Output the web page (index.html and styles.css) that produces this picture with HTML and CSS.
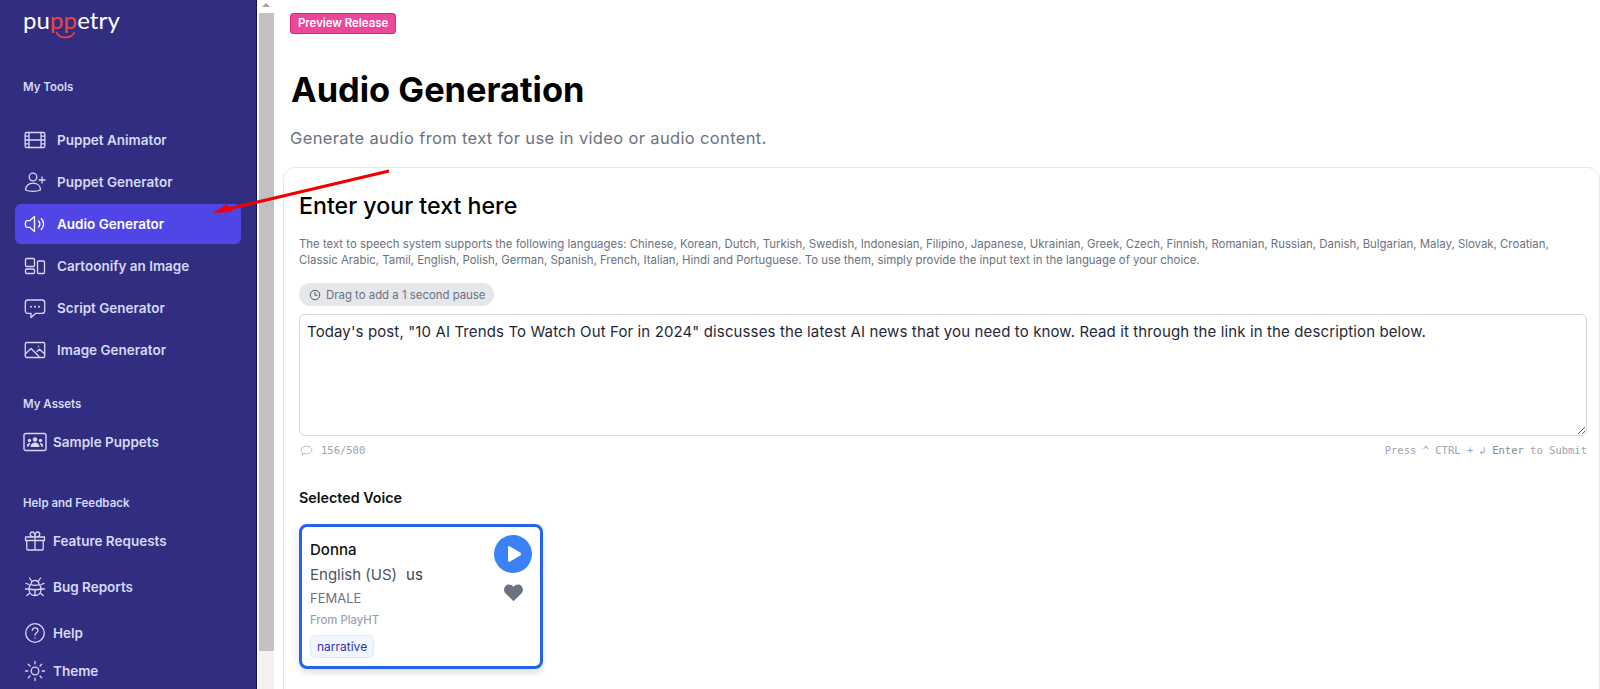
FILE: index.html
```html
<!DOCTYPE html>
<html lang="en">
<head>
<meta charset="utf-8">
<title>Audio Generation</title>
<link rel="stylesheet" href="styles.css">
</head>
<body>
<div class="app">
  <aside class="sidebar">
    <div class="logo">
      <span class="logo-text">pu<span class="logo-red">pp</span>etry</span>
      <svg class="logo-smile" viewBox="0 0 26 10"><path d="M2 2c3 8 18 8 22 0" fill="none" stroke="#ef4444" stroke-width="2" stroke-linecap="round"/></svg>
    </div>
    <h3 class="nav-title first">My Tools</h3>
    <nav class="nav">
      <a class="nav-item"><svg class="icon" viewBox="0 0 24 24"><rect x="2.2" y="4.5" width="19.6" height="15" rx="1.2"/><path d="M6 4.5v15M18 4.500v15M2.200 8.200H6M2.200 12h19.600M2.200 15.800H6M18 8.200h3.800M18 15.800h3.800"/></svg>Puppet Animator</a>
      <a class="nav-item"><svg class="icon" viewBox="0 0 24 24"><circle cx="10" cy="7" r="3.800"/><path d="M2.500 20c0-4.500 3.400-6.800 7.500-6.800s7.500 2.300 7.500 6.800c-2 .9-4.600 1.300-7.500 1.300S4.500 20.900 2.500 20zM19 7v6M16 10h6"/></svg>Puppet Generator</a>
      <a class="nav-item active"><svg class="icon" viewBox="0 0 24 24"><path d="M11.500 4.500 6.700 8.700H4.200c-.9 0-1.500.7-1.700 1.500-.2 1.200-.2 2.400 0 3.600.2.800.8 1.500 1.700 1.500h2.500l4.800 4.200zM15.500 9c1.600 1.700 1.600 4.300 0 6M18.300 6.500c3 3.100 3 7.900 0 11"/></svg>Audio Generator</a>
      <a class="nav-item"><svg class="icon" viewBox="0 0 24 24"><rect x="2.500" y="4.500" width="9" height="8" rx="1.200"/><rect x="2.500" y="15" width="9" height="4.500" rx="1.200"/><rect x="14.500" y="7" width="7" height="12.500" rx="1.200"/></svg>Cartoonify an Image</a>
      <a class="nav-item"><svg class="icon" viewBox="0 0 24 24"><path d="M5 4h14c1.600 0 2.700 1.100 2.700 2.700v8c0 1.600-1.100 2.700-2.700 2.700h-6.500L8 21.500v-4.100H5c-1.600 0-2.700-1.100-2.700-2.700v-8C2.300 5.100 3.400 4 5 4z"/><path d="M8 10.700h.01M12 10.700h.01M16 10.700h.01" stroke-width="2"/></svg>Script Generator</a>
      <a class="nav-item"><svg class="icon" viewBox="0 0 24 24"><rect x="2.300" y="4.500" width="19.400" height="15" rx="1.200"/><path d="m2.300 16 5.700-5.500 8 8M14 13.500l2.500-2.200 5.200 4.700M15.500 8.500h.01"/></svg>Image Generator</a>
    </nav>
    <h3 class="nav-title assets">My Assets</h3>
    <a class="nav-item tight"><svg class="icon wide" viewBox="0 0 24 20"><rect x="1" y="1.500" width="22" height="17" rx="2" stroke-width="1.400"/><circle cx="12" cy="7.500" r="2.200" class="solid"/><circle cx="6.500" cy="8.500" r="1.700" class="solid"/><circle cx="17.500" cy="8.500" r="1.700" class="solid"/><path d="M7.500 15c0-3 2-4.500 4.500-4.500s4.500 1.500 4.500 4.500zM3.800 14.500c0-2 1-3.500 3-3.500l.5.400c-1 1-1.300 2-1.300 3.100zM20.200 14.500c0-2-1-3.500-3-3.500l-.5.400c1 1 1.300 2 1.300 3.100z" class="solid"/></svg>Sample Puppets</a>
    <h3 class="nav-title help">Help and Feedback</h3>
    <a class="nav-item tight gift"><svg class="icon" viewBox="0 0 24 24"><path d="M2.500 8h19v3.500h-19zM3.800 11.500h16.400V20a1 1 0 0 1-1 1H4.800a1 1 0 0 1-1-1zM12 8v13M12 8C9.500 8 7.200 7.500 7.200 5.300 7.200 3.800 8.300 3 9.400 3 11.300 3 12 5.500 12 8zM12 8c2.500 0 4.800-.5 4.800-2.700C16.800 3.800 15.700 3 14.600 3 12.700 3 12 5.500 12 8z"/></svg>Feature Requests</a>
    <a class="nav-item tight bug"><svg class="icon" viewBox="0 0 24 24"><path d="M8 9.500c0-2.500 1.800-4 4-4s4 1.500 4 4c1.500.8 2 2.500 2 4.500 0 4-2.500 6.500-6 6.500S6 18 6 14c0-2 .5-3.700 2-4.500zM8 9.500c2.500 1 5.500 1 8 0M6 14c4 1 8 1 12 0M12 14.500v6M8.500 6 6.500 3M15.500 6l2-3M6 9.500l-3-1.200M18 9.500l3-1.200M6 14H2.500M18 14h3.500M6.800 18l-3 2.500M17.200 18l3 2.500"/></svg>Bug Reports</a>
    <a class="nav-item tight helpitem"><svg class="icon" viewBox="0 0 24 24"><circle cx="12" cy="12" r="9.300"/><path d="M9.200 9.300c.3-1.500 1.500-2.400 2.900-2.400 1.600 0 2.900 1 2.900 2.500 0 2.400-3 2.400-3 4.800M12 17.200h.01"/></svg>Help</a>
    <a class="nav-item tight theme"><svg class="icon" viewBox="0 0 24 24"><circle cx="12" cy="12" r="3.800"/><path d="M12 2.500v2.300M12 19.200v2.300M2.500 12h2.300M19.200 12h2.300M5.300 5.300 7 7M17 17l1.700 1.700M5.300 18.700 7 17M17 7l1.700-1.700"/></svg>Theme</a>
  </aside>

  <div class="scrollbar">
    <div class="scroll-arrow"></div>
    <div class="scroll-thumb"></div>
  </div>

  <main class="main">
    <span class="badge">Preview Release</span>
    <h1 class="page-title">Audio Generation</h1>
    <p class="page-sub">Generate audio from text for use in video or audio content.</p>
    <section class="panel">
      <h2 class="panel-title">Enter your text here</h2>
      <p class="panel-desc">The text to speech system supports the following languages: Chinese, Korean, Dutch, Turkish, Swedish, Indonesian, Filipino, Japanese, Ukrainian, Greek, Czech, Finnish, Romanian, Russian, Danish, Bulgarian, Malay, Slovak, Croatian, Classic Arabic, Tamil, English, Polish, German, Spanish, French, Italian, Hindi and Portuguese. To use them, simply provide the input text in the language of your choice.</p>
      <div class="pill"><svg class="pill-icon" viewBox="0 0 24 24"><circle cx="12" cy="12" r="9.500"/><path d="M12 6v6.500h5"/></svg>Drag to add a 1 second pause</div>
      <textarea class="editor" readonly>Today's post, "10 AI Trends To Watch Out For in 2024" discusses the latest AI news that you need to know. Read it through the link in the description below.</textarea>
      <div class="editor-foot">
        <span class="count"><svg class="count-icon" viewBox="0 0 24 24"><path d="M12 4c5.500 0 10 3 10 7s-4.500 7-10 7c-1.200 0-2.300-.1-3.300-.4L4 20.500l1.200-4C3.200 15 2 13.100 2 11c0-4 4.500-7 10-7z"/></svg>156/500</span>
        <span class="hint">Press ^ CTRL + ↲ <b>Enter</b> to Submit</span>
      </div>
      <h3 class="voice-heading">Selected Voice</h3>
      <article class="voice">
        <div class="voice-info">
          <div class="voice-name">Donna</div>
          <div class="voice-lang">English (US)<span class="voice-flag">us</span></div>
          <div class="voice-gender">FEMALE</div>
          <div class="voice-src">From PlayHT</div>
          <span class="voice-tag">narrative</span>
        </div>
        <div class="voice-actions">
          <span class="play"><svg viewBox="0 0 24 24"><path d="M6 3.800c0-1.100 1.100-1.700 2-1.200l13 8c.9.600.9 2.200 0 2.800l-13 8c-.9.500-2-.1-2-1.200z" fill="#fff"/></svg></span>
          <svg class="heart" viewBox="0 0 24 24"><path d="M12 22 3 13.200C.6 10.800.6 6.800 3 4.500c2.400-2.300 6.200-2.200 9 1 2.800-3.200 6.600-3.300 9-1 2.400 2.300 2.400 6.300 0 8.700z" fill="#6b7280"/></svg>
        </div>
      </article>
    </section>
  </main>
</div>
<svg class="annotation" viewBox="0 0 1600 689"><path d="M389 171 228 209" stroke="#f00000" stroke-width="3" fill="none"/><path d="m213 213 14-9 5 8z" fill="#f00000"/></svg>
</body>
</html>
```
FILE: styles.css
```css
* { box-sizing: border-box; }
html, body { margin: 0; height: 689px; overflow: hidden; background: #fff; }
body { font-family: Inter, "Liberation Sans", sans-serif; color: #000; }

.app { display: flex; height: 689px; }

.sidebar {
  width: 257px;
  flex: none;
  height: 689px;
  background: #312e81;
  border-right: 1px solid #0b0b70;
  padding: 10px 15px 0;
  color: #d5d9f5;
  overflow: hidden;
}

.logo { position: relative; height: 35px; padding-left: 8px; }
.logo-text { font-family: Lato, sans-serif; font-size: 24px; line-height: 20px; color: #fff; letter-spacing: .1px; display: block; }
.logo-red { color: #ef4444; }
.logo-smile { position: absolute; left: 38px; top: 21px; width: 25px; height: 8px; }

.nav-title { margin: 0 0 0 8px; font-size: 11.500px; line-height: 16px; font-weight: 600; color: #d5d9f5; }
.nav-title.first { margin-top: 34px; margin-bottom: 25px; }
.nav-title.assets { margin-top: 26px; margin-bottom: 10px; }
.nav-title.help { margin-top: 33px; margin-bottom: 10px; }

.nav { display: flex; flex-direction: column; gap: 2px; }
.nav-item {
  display: flex;
  align-items: center;
  gap: 10px;
  height: 40px;
  padding-left: 8px;
  border-radius: 6px;
  font-size: 13.500px;
  font-weight: 600;
  color: #d5d9f5;
}
.nav-item.active { background: #4f46e5; color: #fff; }
.nav-item.tight { gap: 6px; }
.nav-item.bug { margin-top: 6px; }
.nav-item.helpitem { margin-top: 6px; }
.nav-item.theme { margin-top: -2px; }

.icon { width: 24px; height: 24px; flex: none; fill: none; stroke: currentColor; stroke-width: 1.300; stroke-linecap: round; stroke-linejoin: round; }
.icon.wide { width: 24px; height: 20px; }
.icon .solid { fill: currentColor; stroke: none; }

.scrollbar { width: 17px; flex: none; height: 689px; background: #f1f1f1; border-left: 2px solid #fff; display: flex; flex-direction: column; }
.scroll-arrow { height: 13px; background: #fff; position: relative; }
.scroll-arrow::before { content: ""; position: absolute; left: 3px; top: 3px; border-left: 4px solid transparent; border-right: 4px solid transparent; border-bottom: 4px solid #a3a3a3; }
.scroll-thumb { height: 638px; background: #c1c1c1; }

.main { flex: 1; min-width: 0; padding: 13px 0 0 9px; background: #fff; }

.badge {
  display: inline-block;
  margin-left: 7px;
  height: 21px;
  padding: 0 7px;
  background: #ec4899;
  border: 1px solid #db2777;
  border-radius: 3px;
  color: #fff;
  font-size: 11.400px;
  line-height: 19px;
  font-weight: 600;
  vertical-align: top;
}

.page-title { margin: 36px 0 0 8px; font-size: 34.400px; line-height: 40px; font-weight: 700; color: #000; }
.page-sub { margin: 16px 0 0 7px; font-size: 16.500px; line-height: 24px; color: #6b7280; letter-spacing: .35px; }

.panel {
  margin-top: 17px;
  height: 540px;
  padding: 22px 12px 0 15px;
  border: 1px solid #e5e7eb;
  border-radius: 12px;
  background: #fff;
}
.panel-title { margin: 0; font-size: 23.200px; line-height: 32px; font-weight: 500; color: #000; }
.panel-desc { margin: 15px 0 0; font-size: 11.400px; line-height: 15.500px; color: #6b7280; }

.pill {
  display: inline-flex;
  align-items: center;
  gap: 5px;
  height: 23px;
  margin-top: 15px;
  padding: 0 8px 0 10px;
  background: #e5e7eb;
  border-radius: 12px;
  font-size: 11.400px;
  color: #6b7280;
  vertical-align: top;
}
.pill-icon { width: 12px; height: 12px; fill: none; stroke: #4b5563; stroke-width: 2; }

.editor {
  display: block;
  width: 100%;
  height: 122px;
  margin-top: 8px;
  padding: 7px 7px;
  border: 1px solid #d1d5db;
  border-radius: 6px;
  font-family: Inter, sans-serif;
  font-size: 15px;
  line-height: 20px;
  letter-spacing: .12px;
  color: #1f2937;
  background: #fff;
  outline: none;
  resize: vertical;
}

.editor-foot { display: flex; justify-content: space-between; align-items: center; margin-top: 6px; height: 16px; font-family: "DejaVu Sans Mono", monospace; font-size: 10.500px; color: #9ca3af; }
.count { display: inline-flex; align-items: center; gap: 8px; padding-left: 1px; }
.count-icon { width: 13px; height: 13px; fill: none; stroke: #9ca3af; stroke-width: 1.300; }
.hint b { font-weight: 400; color: #858b99; }

.voice-heading { margin: 30px 0 0; font-size: 14.300px; line-height: 20px; font-weight: 600; color: #111; }

.voice {
  display: flex;
  justify-content: space-between;
  width: 244px;
  height: 145px;
  margin-top: 16px;
  padding: 9px 8px 0 8px;
  border: 3px solid #2563eb;
  border-radius: 8px;
  background: #fff;
  box-shadow: 0 4px 6px rgba(0,0,0,.12);
}
.voice-name { margin-top: 4px; font-size: 15px; line-height: 20px; font-weight: 500; color: #111; }
.voice-lang { margin-top: 4px; font-size: 15px; line-height: 22px; color: #4b5563; }
.voice-flag { margin-left: 9px; color: #374151; }
.voice-gender { margin-top: 2px; font-size: 13px; line-height: 20px; color: #6b7280; }
.voice-src { margin-top: 2px; font-size: 11.300px; line-height: 20px; font-weight: 500; color: #9ca3af; }
.voice-tag {
  display: inline-block;
  margin-top: 5px;
  height: 23px;
  padding: 0 6px;
  background: #eff6ff;
  border: 1px solid #dbeafe;
  border-radius: 5px;
  font-size: 12px;
  line-height: 21px;
  color: #3730a3;
}
.voice-actions { display: flex; flex-direction: column; align-items: center; gap: 9px; margin-top: -1px; margin-right: 0; }
.play { display: flex; align-items: center; justify-content: center; width: 38px; height: 38px; border-radius: 50%; background: #3b82f6; }
.play svg { width: 20px; height: 20px; }
.heart { width: 21px; height: 21px; }

.annotation { position: absolute; left: 0; top: 0; width: 1600px; height: 689px; pointer-events: none; }
```
